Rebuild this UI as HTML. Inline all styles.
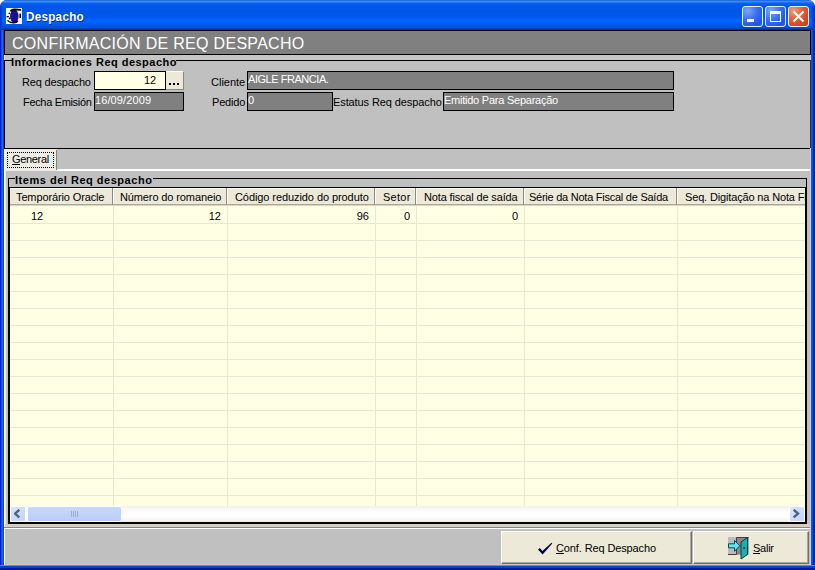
<!DOCTYPE html>
<html><head><meta charset="utf-8">
<style>
*{margin:0;padding:0;box-sizing:border-box}
html,body{width:815px;height:570px;overflow:hidden;background:#fff}
body{position:relative;font-family:"Liberation Sans",sans-serif;font-size:11px;color:#000}
.a{position:absolute}
.t{position:absolute;white-space:nowrap;line-height:1}
u{text-decoration:underline;text-underline-offset:1px}
</style></head><body>
<div class="a" style="left:0;top:0;width:815px;height:570px;background:#0048d8;border-radius:7px 7px 0 0"></div>
<div class="a" style="left:0;top:0;width:815px;height:30px;border-radius:7px 7px 0 0;background:linear-gradient(to bottom,#0a4ad0 0px,#3d8ffa 1px,#3587f8 2px,#0d63ee 3px,#0058ec 5px,#0055e6 12px,#0058ee 17px,#0064ff 20px,#0060fb 23px,#0054e6 26px,#0049d2 28px,#003bb0 29px,#002c90 30px)"></div>
<div class="a" style="left:0px;top:6px;width:2px;height:24px;background:linear-gradient(to right,#0a34c8,#0a44d8)"></div>
<div class="a" style="left:812px;top:6px;width:3px;height:24px;background:linear-gradient(to right,#0a48d8,#0030b8)"></div>
<div class="a" style="left:0px;top:30px;width:4px;height:536px;background:linear-gradient(to right,#0018c8 0,#0018c8 1px,#0044e0 1px,#1a62f0 2px,#1a62f0 3px,#0848c8 3px)"></div>
<div class="a" style="left:811px;top:30px;width:4px;height:535px;background:linear-gradient(to right,#1a58e0 0,#0848d0 2px,#0030b8 2px,#0020a0 4px)"></div>
<div class="a" style="left:0px;top:565px;width:815px;height:5px;background:linear-gradient(to bottom,#7088c8 0,#7088c8 1px,#0a44dc 1px,#0a3ccc 3px,#0020a0 3px,#001888 5px)"></div>
<svg class="a" style="left:6px;top:8px" width="16" height="16" viewBox="0 0 16 16">
<rect width="16" height="16" fill="#f4f8f4"/>
<ellipse cx="8.3" cy="8.2" rx="4.2" ry="6.6" fill="#1c0c98"/>
<path d="M3.8 3 Q4.5 0.3 9 0.4 L15.2 0.9 L15.2 2.8 L9 2.6 Q6 2.4 5.5 4 Z" fill="#000"/>
<path d="M0.8 12.8 Q4 15.8 8.5 15.5 Q11.5 15 12.5 13 L11.2 12.2 Q8 14.8 3.5 13.2 L2.2 12 Z" fill="#000"/>
<rect x="13.4" y="5.6" width="1.6" height="4.4" fill="#000"/>
<rect x="0.6" y="8" width="2.2" height="1.3" fill="#000"/>
<circle cx="3.3" cy="5.4" r="0.8" fill="#000"/>
<circle cx="3.6" cy="10.3" r="0.9" fill="#000"/>
</svg>
<div class="t" style="left:26px;top:10px;font-size:13.6px;font-weight:700;color:#fff;letter-spacing:0.3px;transform:scaleX(0.86);transform-origin:0 0;text-shadow:1px 1px 0 #0a2a9c">Despacho</div>
<div class="a" style="left:742px;top:6px;width:21px;height:21px;border:1px solid #e0f4ff;border-radius:3px;background:radial-gradient(circle at 25% 20%,#7aa4ff 0%,#3a70f0 45%,#1f55e4 80%,#2a5ee8 100%)"><div class="a" style="left:4px;top:12px;width:7px;height:3px;background:#fff"></div></div>
<div class="a" style="left:765px;top:6px;width:21px;height:21px;border:1px solid #e0f4ff;border-radius:3px;background:radial-gradient(circle at 25% 20%,#7aa4ff 0%,#3a70f0 45%,#1f55e4 80%,#2a5ee8 100%)"><div class="a" style="left:4px;top:4px;width:11px;height:11px;border:1px solid #fff;border-top-width:3px"></div></div>
<div class="a" style="left:788px;top:6px;width:21px;height:21px;border:1px solid #e0f4ff;border-radius:3px;background:radial-gradient(circle at 25% 20%,#f39a7a 0%,#e25c34 45%,#cf401c 85%,#d85030 100%)"><svg class="a" style="left:3px;top:3px" width="13" height="13" viewBox="0 0 13 13"><path d="M1.5 1.5 L11.5 11.5 M11.5 1.5 L1.5 11.5" stroke="#fff" stroke-width="2"/></svg></div>
<div class="a" style="left:4px;top:30px;width:807px;height:535px;background:#c0c0c0"></div>
<div class="a" style="left:810px;top:55px;width:1px;height:510px;background:#c8d0e0"></div>
<div class="a" style="left:4px;top:30px;width:807px;height:25px;background:#808080;border:1px solid #000"></div>
<div class="t" style="left:12px;top:36px;font-size:16px;color:#fff;letter-spacing:0.3px">CONFIRMACIÓN DE REQ DESPACHO</div>
<div class="a" style="left:4px;top:55px;width:806px;height:5px;background:#c6c6c6"></div>
<div class="a" style="left:4px;top:55px;width:1px;height:5px;background:#f0f0f0"></div>
<div class="a" style="left:4px;top:60px;width:8px;height:1px;background:#000"></div>
<div class="a" style="left:176px;top:60px;width:634px;height:1px;background:#000"></div>
<div class="a" style="left:4px;top:60px;width:1px;height:88px;background:#000"></div>
<div class="a" style="left:810px;top:60px;width:1px;height:88px;background:#303030"></div>
<div class="t" style="left:11px;top:57px;font-weight:700;letter-spacing:0.48px">Informaciones Req despacho</div>
<div class="a" style="left:4px;top:148px;width:806px;height:1px;background:#000"></div>
<div class="t" style="left:22px;top:77px;letter-spacing:-0.18px">Req despacho</div>
<div class="t" style="left:23px;top:97px;letter-spacing:-0.33px">Fecha Emisión</div>
<div class="a" style="left:94px;top:71px;width:72px;height:19px;border:1px solid #000;background:#ffffe6"></div>
<div class="t" style="left:144px;top:75px;">12</div>
<div class="a" style="left:166px;top:71px;width:18px;height:19px;background:#ece9d8;border-right:1px solid #8a887c;border-bottom:1px solid #8a887c;border-top:1px solid #fff"></div>
<div class="a" style="left:169px;top:83px;width:2px;height:2px;background:#000"></div>
<div class="a" style="left:173px;top:83px;width:2px;height:2px;background:#000"></div>
<div class="a" style="left:177px;top:83px;width:2px;height:2px;background:#000"></div>
<div class="a" style="left:94px;top:92px;width:90px;height:19px;border:1px solid #000;background:#808080"></div>
<div class="t" style="left:95px;top:95px;color:#fff;letter-spacing:0.11px">16/09/2009</div>
<div class="t" style="left:211px;top:77px;letter-spacing:0px">Cliente</div>
<div class="t" style="left:212px;top:97px;letter-spacing:-0.2px">Pedido</div>
<div class="a" style="left:247px;top:71px;width:427px;height:19px;border:1px solid #000;background:#808080"></div>
<div class="t" style="left:248px;top:74px;color:#fff;letter-spacing:-0.46px">AIGLE FRANCIA.</div>
<div class="a" style="left:247px;top:92px;width:86px;height:19px;border:1px solid #000;background:#808080"></div>
<div class="t" style="left:248px;top:95px;color:#fff;letter-spacing:-0.25px">0</div>
<div class="t" style="left:333px;top:97px;letter-spacing:-0.1px">Estatus Req despacho</div>
<div class="a" style="left:443px;top:92px;width:231px;height:19px;border:1px solid #000;background:#808080"></div>
<div class="t" style="left:444px;top:95px;color:#fff;letter-spacing:-0.24px">Emitido Para Separação</div>
<div class="a" style="left:4px;top:149px;width:1px;height:416px;background:#fff"></div>
<div class="a" style="left:5px;top:149px;width:52px;height:22px;background:#eeede5"></div>
<div class="a" style="left:56px;top:150px;width:1px;height:20px;background:#808080"></div>
<div class="a" style="left:57px;top:169px;width:753px;height:2px;background:#fff"></div>
<div class="a" style="left:7px;top:152px;width:47px;height:16px;border:1px dotted #000"></div>
<div class="t" style="left:12px;top:154px;letter-spacing:-0.33px">General</div>
<div class="a" style="left:12px;top:164px;width:8px;height:1px;background:#000"></div>
<div class="a" style="left:8px;top:178px;width:7px;height:1px;background:#000"></div>
<div class="a" style="left:153px;top:178px;width:654px;height:1px;background:#000"></div>
<div class="a" style="left:8px;top:178px;width:1px;height:346px;background:#000"></div>
<div class="a" style="left:806px;top:178px;width:1px;height:346px;background:#000"></div>
<div class="a" style="left:8px;top:523px;width:799px;height:1px;background:#000"></div>
<div class="t" style="left:15px;top:175px;font-weight:700;letter-spacing:0.52px">Items del Req despacho</div>
<div class="a" style="left:9px;top:187px;width:797px;height:336px;border:1px solid #000;background:#ffffe3"></div>
<div class="a" style="left:10px;top:188px;width:795px;height:334px;overflow:hidden">
<div class="a" style="left:0px;top:0px;width:795px;height:17px;background:#ece9d8;border-top:1px solid #fff;border-bottom:1px solid #aca899"></div>
<div class="a" style="left:0px;top:17px;width:795px;height:1px;background:#d8d5c0"></div>
<div class="t" style="left:6px;top:4px;letter-spacing:-0.125px">Temporário Oracle</div>
<div class="a" style="left:102px;top:0px;width:1px;height:17px;background:#8c8a80"></div>
<div class="a" style="left:103px;top:1px;width:1px;height:15px;background:#fff"></div>
<div class="t" style="left:110px;top:4px;letter-spacing:-0.118px">Número do romaneio</div>
<div class="a" style="left:216px;top:0px;width:1px;height:17px;background:#8c8a80"></div>
<div class="a" style="left:217px;top:1px;width:1px;height:15px;background:#fff"></div>
<div class="t" style="left:225px;top:4px;letter-spacing:-0.08px">Código reduzido do produto</div>
<div class="a" style="left:364px;top:0px;width:1px;height:17px;background:#8c8a80"></div>
<div class="a" style="left:365px;top:1px;width:1px;height:15px;background:#fff"></div>
<div class="t" style="left:373px;top:4px;letter-spacing:0.25px">Setor</div>
<div class="a" style="left:405px;top:0px;width:1px;height:17px;background:#8c8a80"></div>
<div class="a" style="left:406px;top:1px;width:1px;height:15px;background:#fff"></div>
<div class="t" style="left:414px;top:4px;letter-spacing:-0.158px">Nota fiscal de saída</div>
<div class="a" style="left:513px;top:0px;width:1px;height:17px;background:#8c8a80"></div>
<div class="a" style="left:514px;top:1px;width:1px;height:15px;background:#fff"></div>
<div class="t" style="left:519px;top:4px;letter-spacing:-0.25px">Série da Nota Fiscal de Saída</div>
<div class="a" style="left:666px;top:0px;width:1px;height:17px;background:#8c8a80"></div>
<div class="a" style="left:667px;top:1px;width:1px;height:15px;background:#fff"></div>
<div class="t" style="left:675px;top:4px;letter-spacing:-0.15px">Seq. Digitação na Nota Fiscal</div>
<div class="a" style="left:0px;top:35px;width:795px;height:1px;background:#e8e7d0"></div>
<div class="a" style="left:0px;top:52px;width:795px;height:1px;background:#e8e7d0"></div>
<div class="a" style="left:0px;top:69px;width:795px;height:1px;background:#e8e7d0"></div>
<div class="a" style="left:0px;top:86px;width:795px;height:1px;background:#e8e7d0"></div>
<div class="a" style="left:0px;top:103px;width:795px;height:1px;background:#e8e7d0"></div>
<div class="a" style="left:0px;top:120px;width:795px;height:1px;background:#e8e7d0"></div>
<div class="a" style="left:0px;top:137px;width:795px;height:1px;background:#e8e7d0"></div>
<div class="a" style="left:0px;top:154px;width:795px;height:1px;background:#e8e7d0"></div>
<div class="a" style="left:0px;top:171px;width:795px;height:1px;background:#e8e7d0"></div>
<div class="a" style="left:0px;top:188px;width:795px;height:1px;background:#e8e7d0"></div>
<div class="a" style="left:0px;top:205px;width:795px;height:1px;background:#e8e7d0"></div>
<div class="a" style="left:0px;top:222px;width:795px;height:1px;background:#e8e7d0"></div>
<div class="a" style="left:0px;top:239px;width:795px;height:1px;background:#e8e7d0"></div>
<div class="a" style="left:0px;top:256px;width:795px;height:1px;background:#e8e7d0"></div>
<div class="a" style="left:0px;top:273px;width:795px;height:1px;background:#e8e7d0"></div>
<div class="a" style="left:0px;top:290px;width:795px;height:1px;background:#e8e7d0"></div>
<div class="a" style="left:0px;top:307px;width:795px;height:1px;background:#e8e7d0"></div>
<div class="a" style="left:103px;top:18px;width:1px;height:300px;background:#e8e7d0"></div>
<div class="a" style="left:217px;top:18px;width:1px;height:300px;background:#e8e7d0"></div>
<div class="a" style="left:365px;top:18px;width:1px;height:300px;background:#e8e7d0"></div>
<div class="a" style="left:406px;top:18px;width:1px;height:300px;background:#e8e7d0"></div>
<div class="a" style="left:514px;top:18px;width:1px;height:300px;background:#e8e7d0"></div>
<div class="a" style="left:667px;top:18px;width:1px;height:300px;background:#e8e7d0"></div>
<div class="t" style="left:21px;top:23px;">12</div>
<div class="t" style="left:11px;top:23px;width:200px;text-align:right">12</div>
<div class="t" style="left:159px;top:23px;width:200px;text-align:right">96</div>
<div class="t" style="left:200px;top:23px;width:200px;text-align:right">0</div>
<div class="t" style="left:308px;top:23px;width:200px;text-align:right">0</div>
<div class="a" style="left:0px;top:318px;width:795px;height:16px;background:linear-gradient(to bottom,#f3f1ec,#fefefe 40%,#fefefe 70%,#f0efe8)"></div>
<div class="a" style="left:0px;top:318px;width:16px;height:16px;background:linear-gradient(135deg,#dce6fc,#c1d3fb);border:1px solid #fff;border-radius:2px"></div>
<div class="a" style="left:17px;top:318px;width:95px;height:16px;background:linear-gradient(to bottom,#c8d8fc,#b8cdfa);border:1px solid #fff;border-radius:2px"></div>
<div class="a" style="left:779px;top:318px;width:16px;height:16px;background:linear-gradient(135deg,#dce6fc,#c1d3fb);border:1px solid #fff;border-radius:2px"></div>
<svg class="a" style="left:4px;top:321px" width="8" height="10" viewBox="0 0 8 10"><path d="M5.3 0.8 L1 4.6 L5.3 8.4" stroke="#4d6185" stroke-width="2.4" fill="none"/></svg>
<svg class="a" style="left:782px;top:321px" width="8" height="10" viewBox="0 0 8 10"><path d="M1.7 0.8 L6 4.6 L1.7 8.4" stroke="#4d6185" stroke-width="2.4" fill="none"/></svg>
<div class="a" style="left:61px;top:323px;width:1px;height:6px;background:#9aaedc"></div>
<div class="a" style="left:63px;top:323px;width:1px;height:6px;background:#9aaedc"></div>
<div class="a" style="left:65px;top:323px;width:1px;height:6px;background:#9aaedc"></div>
<div class="a" style="left:67px;top:323px;width:1px;height:6px;background:#9aaedc"></div>
</div>
<div class="a" style="left:5px;top:524px;width:805px;height:3px;background:#d4d0c4"></div>
<div class="a" style="left:5px;top:171px;width:1px;height:353px;background:#ece9d8"></div>
<div class="a" style="left:5px;top:564px;width:805px;height:1px;background:#ccc8bc"></div>
<div class="a" style="left:4px;top:527px;width:806px;height:1px;background:#8a8678"></div>
<div class="a" style="left:4px;top:528px;width:806px;height:1px;background:#fff"></div>
<div class="a" style="left:501px;top:531px;width:191px;height:33px;background:#ece9d8;border-top:1px solid #fff;border-left:1px solid #fff;border-right:1px solid #716f64;border-bottom:1px solid #716f64;box-shadow:inset -1px -1px 0 #aca899"></div>
<div class="a" style="left:693px;top:531px;width:116px;height:33px;background:#ece9d8;border-top:1px solid #fff;border-left:1px solid #fff;border-right:1px solid #716f64;border-bottom:1px solid #716f64;box-shadow:inset -1px -1px 0 #aca899"></div>
<svg class="a" style="left:532px;top:538px" width="28" height="22" viewBox="0 0 28 22"><path d="M6 11.4 L7.8 9.9 L10.4 13.1 L19.5 4.8 L20.3 5.5 L10.6 16.6 Z" fill="#000050"/></svg>
<div class="t" style="left:556px;top:543px;letter-spacing:-0.12px"><u>C</u>onf. Req Despacho</div>
<div class="t" style="left:753px;top:543px;letter-spacing:-0.25px"><u>S</u>alir</div>
<svg class="a" style="left:724px;top:534px" width="30" height="28" viewBox="0 0 30 28">
<rect x="4" y="3" width="21" height="18" fill="#bcbcbc"/>
<path d="M12.5 3.5 H24.5 V20.5 H12.5 Z" fill="#8a8a8a"/>
<path d="M12.5 19.5 V3.5 H24.5" stroke="#4a3a3a" stroke-width="1" fill="none"/>
<path d="M4 20.5 H12.5 V19" stroke="#4a3a3a" stroke-width="1" fill="none"/>
<path d="M17 8 L23.5 3.5 L23.5 20.5 L17 25 Z" fill="#18b0b0" stroke="#063a3a" stroke-width="1"/>
<rect x="19.5" y="13" width="1.5" height="2" fill="#063a3a"/>
<path d="M4.5 9.8 H10.5 V6.5 L15.8 11.8 L10.5 17.3 V13.8 H4.5 Z" fill="#58e8f8" stroke="#0a4a50" stroke-width="1"/>
</svg>
</body></html>
